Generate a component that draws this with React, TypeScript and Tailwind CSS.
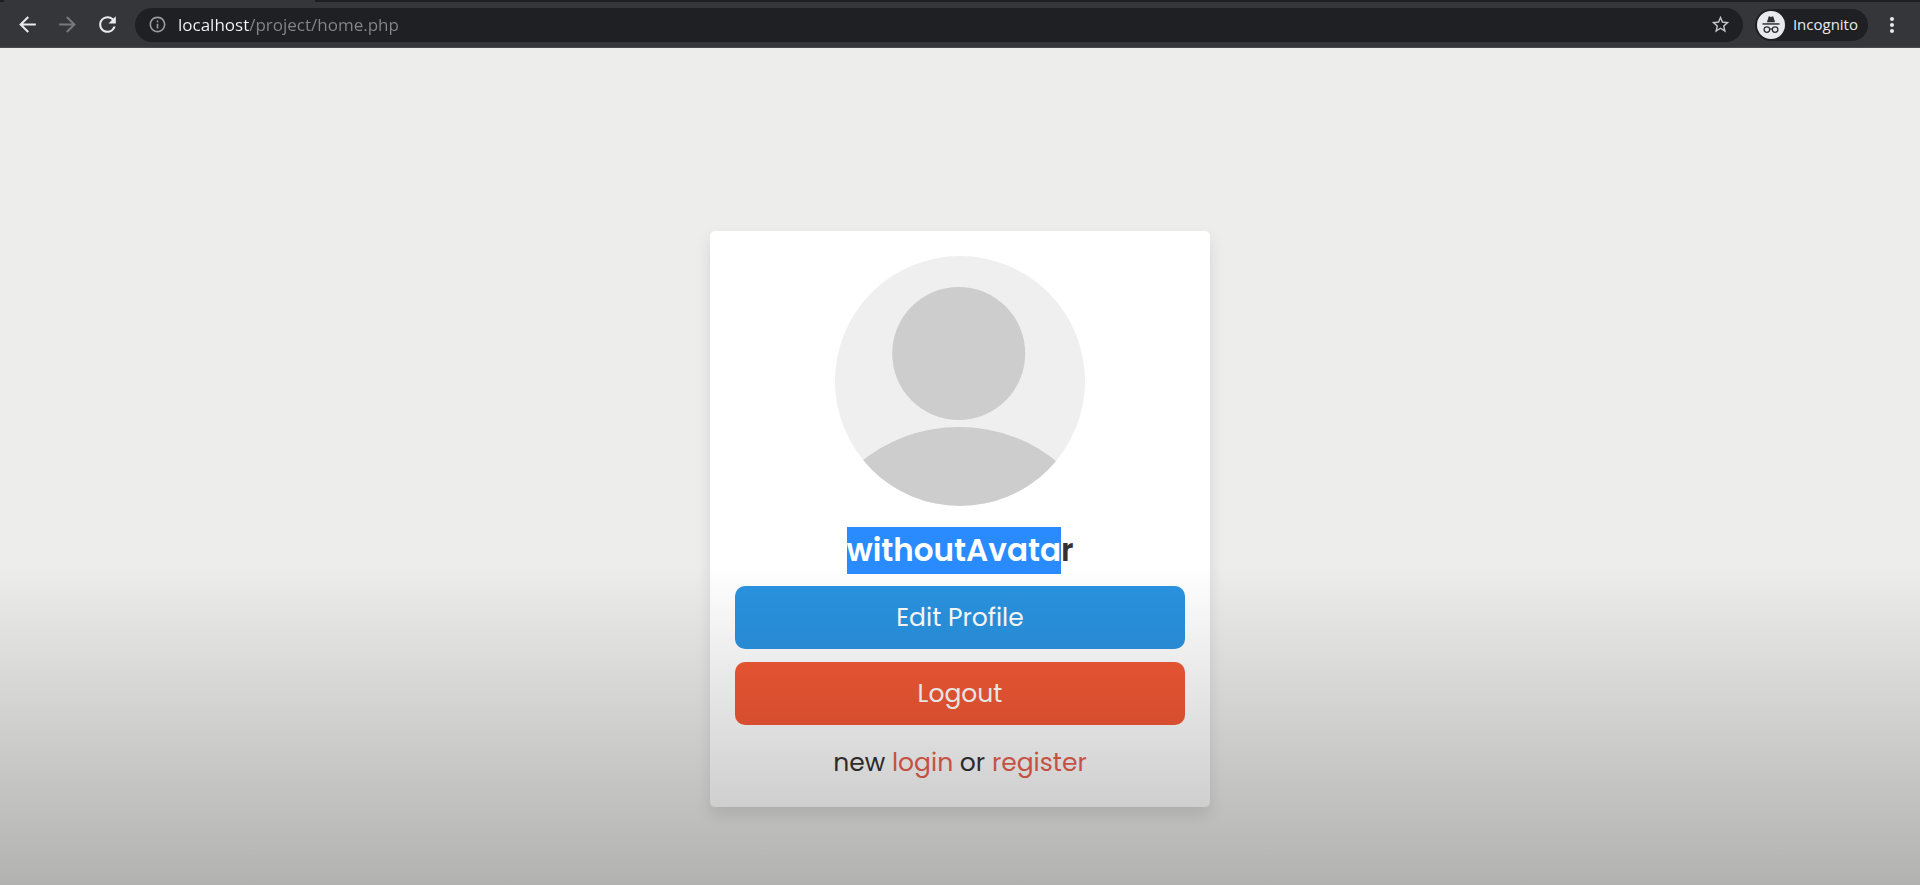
import { MdArrowBack, MdArrowForward, MdInfoOutline, MdMoreVert, MdRefresh, MdStarBorder } from "react-icons/md";

function IncognitoIcon() {
  return (
    <svg viewBox="0 0 28 28" className="size-7" aria-hidden="true">
      <circle cx="14" cy="14" r="14" fill="#e8eaed" />
      <path
        d="M9.9 11.3 11.5 6c.2-.6.7-.8 1.2-.6l1.3.5 1.3-.5c.5-.2 1 0 1.2.6l1.6 5.3z"
        fill="#303135"
      />
      <path d="M5.5 12.2h17v1.5h-17z" fill="#303135" />
      <g fill="none" stroke="#303135" strokeWidth="1.3">
        <circle cx="9.9" cy="18.6" r="2.8" />
        <circle cx="18.1" cy="18.6" r="2.8" />
        <path d="M12.7 18.3c.8-.6 1.8-.6 2.6 0" />
      </g>
    </svg>
  );
}

function BrowserBar() {
  return (
    <header className="border-b border-[#4a4a4d] bg-[#35363a]">
      <div className="flex h-0.5">
        <div className="w-1 bg-[#1d1e21]" />
        <div className="w-[311px]" />
        <div className="flex-1 bg-[#1d1e21]" />
      </div>
      <div className="flex h-[45px] items-center pr-4 pl-[15px]">
        <nav className="flex items-center gap-[15px] text-[25px] text-[#e8eaed]">
          <button type="button" aria-label="Back">
            <MdArrowBack />
          </button>
          <button type="button" aria-label="Forward" disabled className="text-[#77787b]">
            <MdArrowForward />
          </button>
          <button type="button" aria-label="Reload">
            <MdRefresh />
          </button>
        </nav>
        <div className="ml-[15px] flex h-[34px] flex-1 items-center rounded-full bg-[#1f2023] pr-3 pl-[13px]">
          <button type="button" aria-label="Site information" className="text-[19px] text-[#9a9b9f]">
            <MdInfoOutline />
          </button>
          <input
            aria-label="Address"
            type="text"
            defaultValue="localhost/project/home.php"
            className="ml-[11px] min-w-0 flex-1 bg-[linear-gradient(to_right,#f8f9fa_71px,#85868a_71px)] bg-clip-text font-['Open_Sans','Noto_Sans',sans-serif] text-[17px] text-transparent outline-none"
          />
          <button type="button" aria-label="Bookmark this page" className="text-[21px] text-[#c6c7ca]">
            <MdStarBorder />
          </button>
        </div>
        <button
          type="button"
          className="ml-3 flex h-8 items-center gap-2 rounded-full bg-[#1f2023] pr-2.5 pl-0.5 font-['Open_Sans','Noto_Sans',sans-serif] text-[15px] text-[#e8eaed]"
        >
          <IncognitoIcon />
          Incognito
        </button>
        <button type="button" aria-label="Menu" className="ml-3 text-2xl text-[#e8eaed]">
          <MdMoreVert />
        </button>
      </div>
    </header>
  );
}

function DefaultAvatar() {
  return (
    <svg viewBox="0 0 250 250" className="size-[250px]" role="img" aria-label="Profile picture">
      <clipPath id="avatar-clip">
        <circle cx="125" cy="125" r="125" />
      </clipPath>
      <g clipPath="url(#avatar-clip)">
        <rect width="250" height="250" fill="#efefef" />
        <circle cx="123.7" cy="97.5" r="66.5" fill="#cdcdcd" />
        <ellipse cx="124" cy="301" rx="144" ry="130" fill="#cdcdcd" />
      </g>
    </svg>
  );
}

function ProfileCard() {
  return (
    <section className="flex w-[500px] flex-col items-center rounded-[5px] bg-white p-[25px] text-center text-[25px] text-[#333] shadow-[0_8px_16px_rgba(0,0,0,0.1)]">
      <DefaultAvatar />
      <h1 className="mt-[21px] text-[31px] leading-[47px] font-semibold">
        <mark className="inline-block bg-[#2a8bff] text-white">withoutAvata</mark>r
      </h1>
      <a href="#edit" className="mt-3 block w-full rounded-[10px] bg-[#2a93e1] leading-[63px] text-white">
        Edit Profile
      </a>
      <a href="#logout" className="mt-[13px] block w-full rounded-[10px] bg-[#f45935] leading-[63px] text-white">
        Logout
      </a>
      <p className="mt-[19px] leading-[38px]">
        new{" "}
        <a href="#login" className="text-[#e8604f]">
          login
        </a>{" "}
        or{" "}
        <a href="#register" className="text-[#e8604f]">
          register
        </a>
      </p>
    </section>
  );
}

export default function App() {
  return (
    <div className="relative flex min-h-screen flex-col bg-[#ededeb] font-['Poppins','Inter','Liberation_Sans',sans-serif]">
      <BrowserBar />
      <main className="flex flex-1 items-center justify-center pt-[183px] pb-[78px]">
        <ProfileCard />
      </main>
      <div className="pointer-events-none absolute inset-x-0 bottom-0 h-[320px] bg-linear-to-b from-transparent to-black/25" />
    </div>
  );
}
